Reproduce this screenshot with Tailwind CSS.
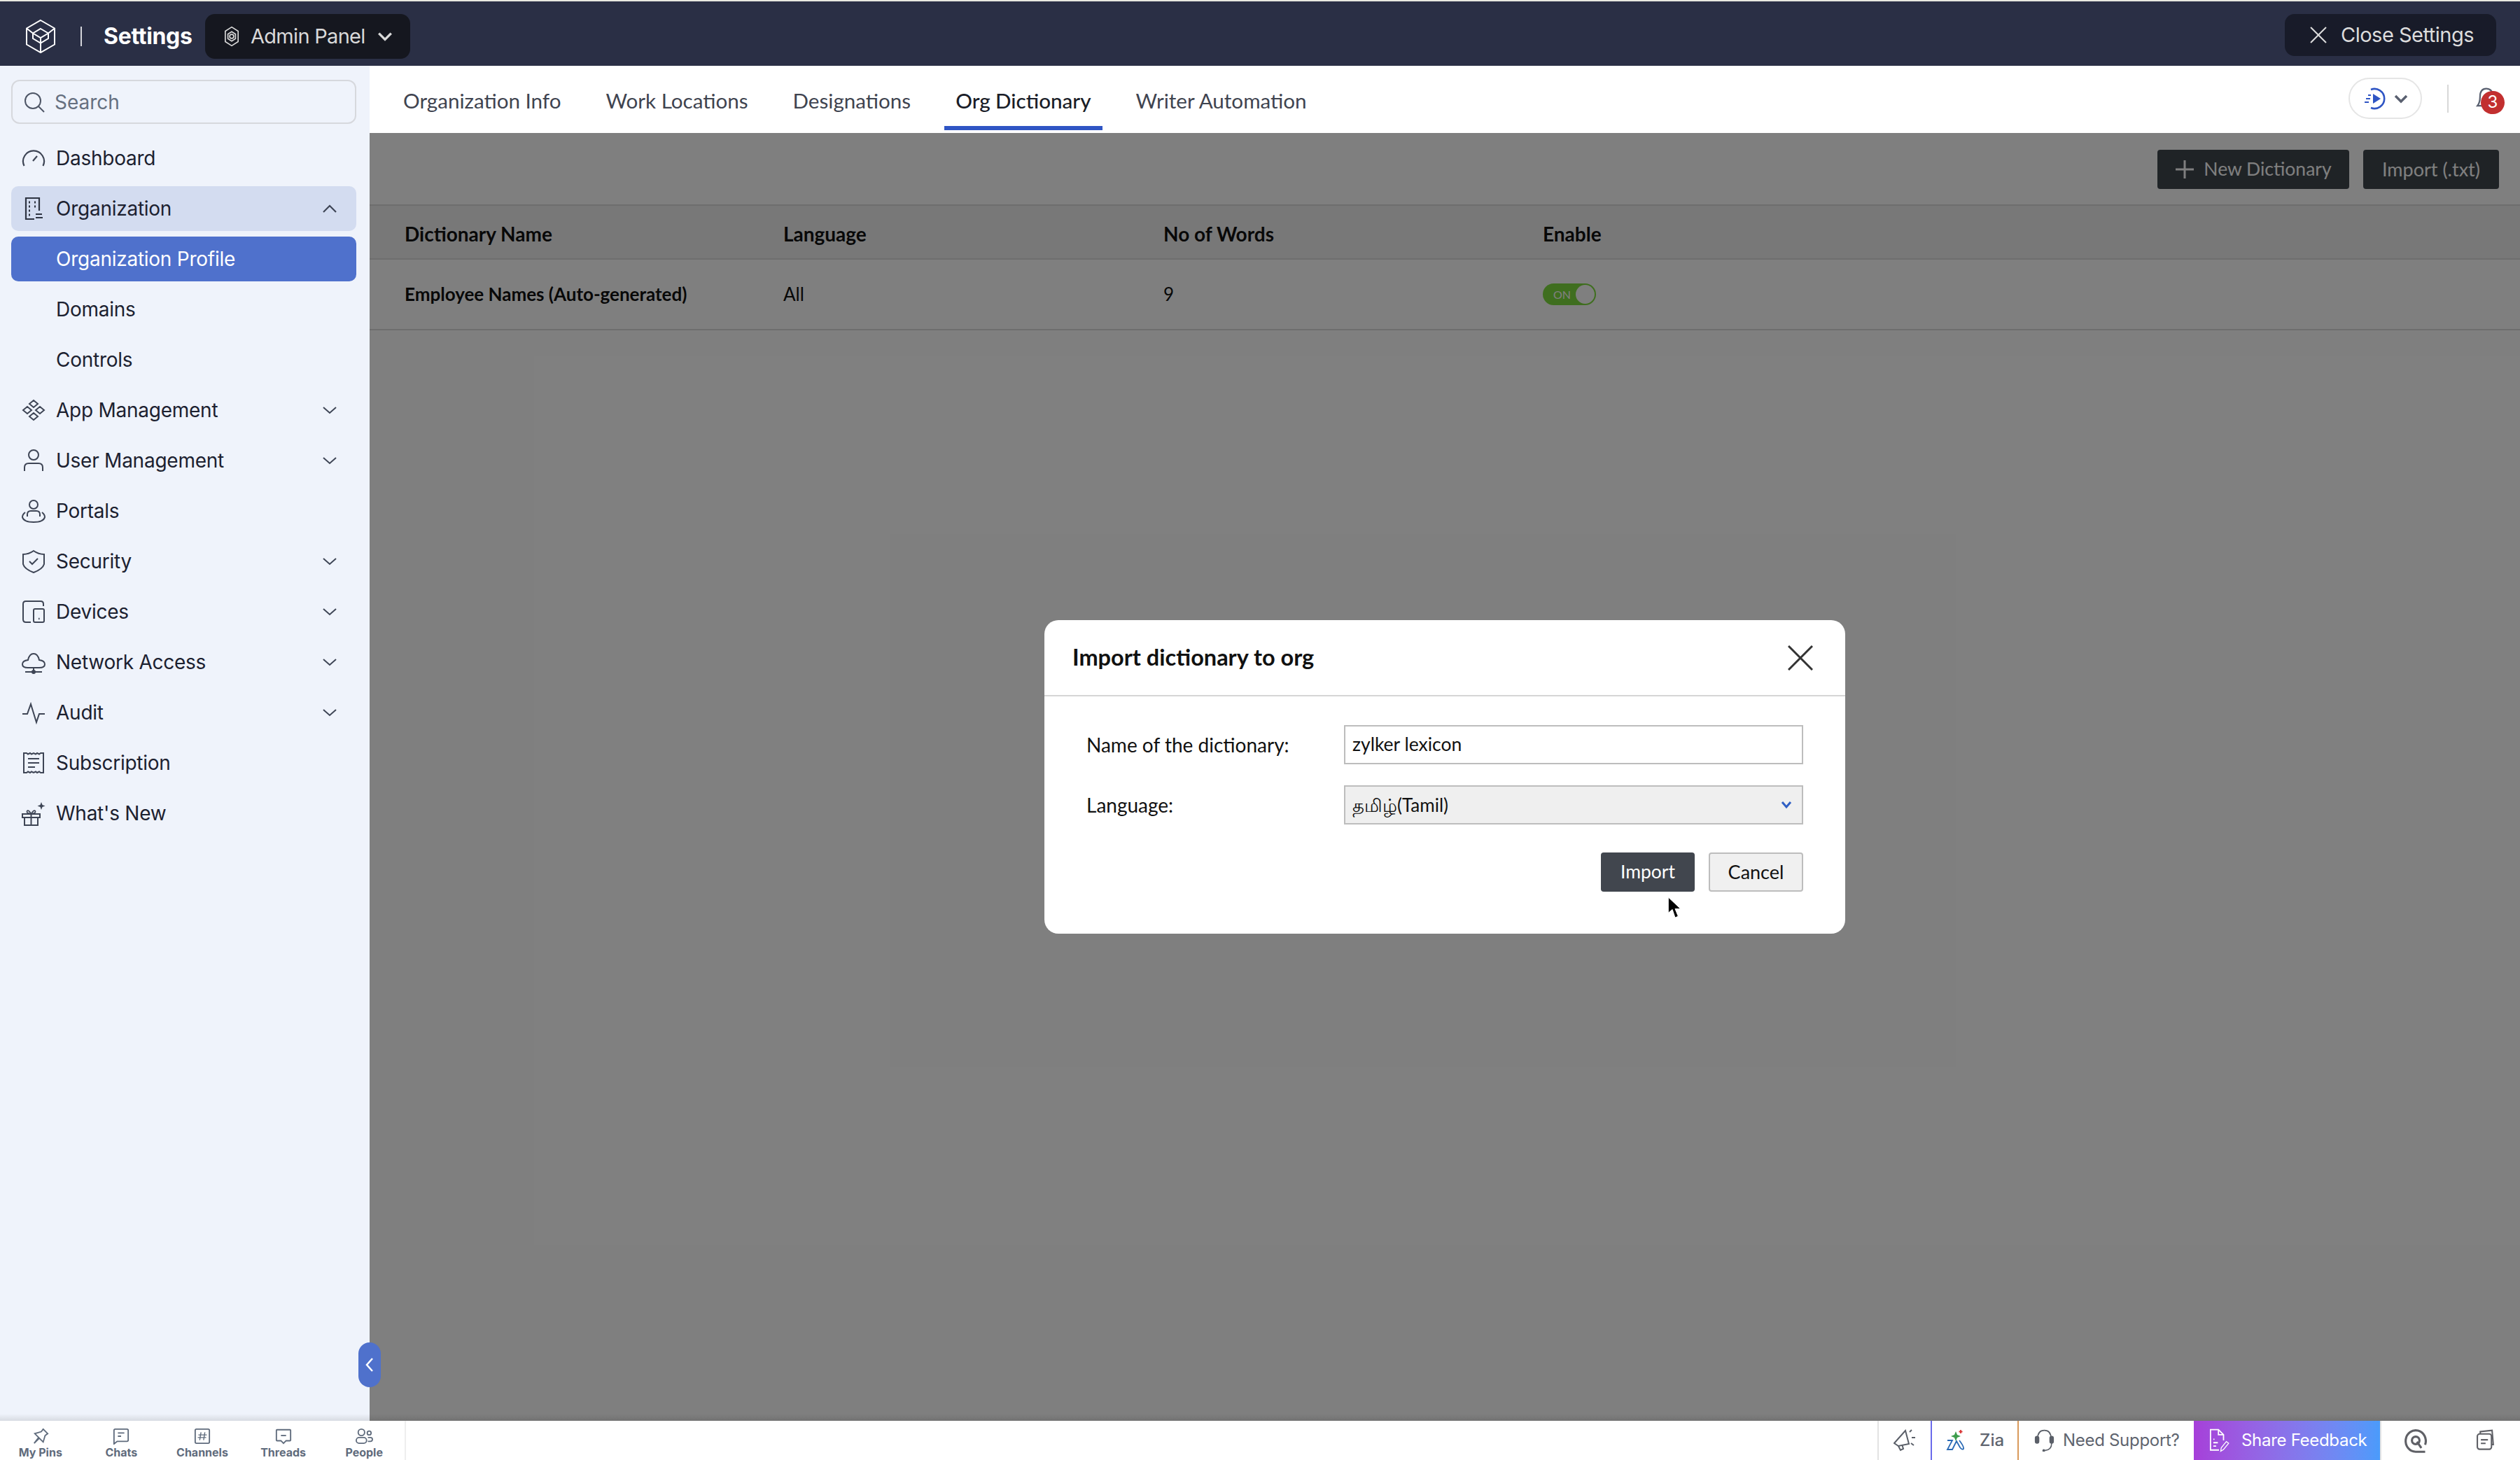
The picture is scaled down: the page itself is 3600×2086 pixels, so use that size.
<!DOCTYPE html>
<html lang="en">
<head>
<meta charset="UTF-8">
<title>Settings - Org Dictionary</title>
<script src="https://cdn.jsdelivr.net/npm/@tailwindcss/browser@4"></script>
</head>
<body class="w-[3600px] h-[2086px] overflow-hidden bg-white font-['Inter','Noto_Sans',sans-serif]">
<div class="flex flex-col h-full">

  <!-- top bar -->
  <header class="h-[94px] shrink-0 border-t-2 border-[#e8e8e0] bg-[#2a2f45] flex items-center justify-between pt-[8px] pl-[36px] pr-[34px] text-white">
    <div class="flex items-center">
      <svg class="w-[44px] h-[50px]" viewBox="0 0 44 50" fill="none" stroke="#fff" stroke-width="2"><path d="M22 2 42 13.500V36.500L22 48 2 36.500V13.500Z"/><path d="M22 14 33 20.500V28L22 34.500 11 28V20.500Z"/><path d="M11 20.500 22 27 33 20.500M22 27V48"/><path d="M2 13.500 11 20.500M42 13.500 33 20.500"/></svg>
      <div class="w-[2px] h-[28px] bg-white/80 ml-[35px]"></div>
      <div class="ml-[31px] w-[128px] text-[32px] font-bold tracking-[-0.3px] whitespace-nowrap">Settings</div>
      <button class="ml-[17px] w-[293px] h-[64px] rounded-[14px] bg-[#15171f] flex items-center pl-[26px] text-[#d9d9d9]">
        <svg class="w-[24px] h-[30px]" viewBox="0 0 26 36" fill="none" stroke="#d9d9d9" stroke-width="2"><path d="M13 2 24 9V27L13 34 2 27V9Z"/><circle cx="13" cy="18" r="3.500"/><path d="M13 10 19.500 14V22L13 26 6.500 22V14Z"/></svg>
        <span class="ml-[15px] w-[163px] text-left text-[29px] tracking-[-0.7px] whitespace-nowrap">Admin Panel</span>
        <svg class="ml-[18px] w-[22px] h-[14px]" viewBox="0 0 24 16" fill="none" stroke="#d9d9d9" stroke-width="4"><path d="M2 3 12 13 22 3"/></svg>
      </button>
    </div>
    <button class="w-[302px] h-[60px] rounded-[14px] bg-[#181b29] flex items-center pl-[36px] text-[#dcdcdc] -mt-[4px]">
      <svg class="w-[24px] h-[24px]" viewBox="0 0 24 24" fill="none" stroke="#dcdcdc" stroke-width="2"><path d="M1 1 23 23M23 1 1 23"/></svg>
      <span class="ml-[20px] text-[29px] tracking-[-0.5px] whitespace-nowrap">Close Settings</span>
    </button>
  </header>

  <div class="flex flex-1 min-h-0">
    <!-- sidebar -->
    <aside class="relative z-20 w-[528px] shrink-0 bg-[#eff3fb] pt-[20px] pl-[16px] pr-[19px] text-[#1c2130]">
      <div class="h-[63px] border-2 border-[#d6d8dd] rounded-[12px] flex items-center pl-[16px] text-[#667080] text-[28px]">
        <svg class="w-[30px] h-[30px]" viewBox="0 0 30 30" fill="none" stroke="#4e5666" stroke-width="2"><circle cx="13" cy="13" r="11"/><path d="m21 21 8 8"/></svg>
        <span class="ml-[14px]">Search</span>
      </div>
      <nav class="mt-[13px] flex flex-col text-[28px] tracking-[-0.25px]">
        <a class="h-[72px] flex items-center pl-[14px] pr-[28px]">
          <svg class="w-[36px] h-[36px]" viewBox="0 0 36 36" fill="none" stroke="#3e4555" stroke-width="2.200"><path d="M4.500 29A15 15 0 1 1 31.500 29"/><path d="m17 22 6-7"/></svg>
          <span class="ml-[14px]">Dashboard</span>
        </a>
        <a class="h-[64px] my-[4px] rounded-[10px] bg-[#d3dcf0] flex items-center pl-[14px] pr-[28px]">
          <svg class="w-[36px] h-[36px]" viewBox="0 0 36 36" fill="none" stroke="#2e3442" stroke-width="2.200"><path d="M26 21V3H7v30h12"/><path d="M11 9h2M19 9h2M11 15h2M19 15h2M11 21h2M11 27h2" stroke-width="3"/><path d="M21 26h9M21 31h10"/></svg>
          <span class="ml-[14px]">Organization</span>
          <svg class="ml-auto w-[20px] h-[12px]" viewBox="0 0 20 12" fill="none" stroke="#3e4555" stroke-width="2.200"><path d="M1 11 10 2 19 11"/></svg>
        </a>
        <a class="h-[64px] my-[4px] rounded-[10px] bg-[#4f71cc] text-white flex items-center pl-[64px]">Organization Profile</a>
        <a class="h-[72px] flex items-center pl-[64px]">Domains</a>
        <a class="h-[72px] flex items-center pl-[64px]">Controls</a>
        <a class="h-[72px] flex items-center pl-[14px] pr-[28px]">
          <svg class="w-[36px] h-[36px]" viewBox="0 0 36 36" fill="none" stroke="#3e4555" stroke-width="2"><path d="m18 4 6 5-6 5-6-5zM18 22l6 5-6 5-6-5zM9 13l6 5-6 5-6-5zM27 13l6 5-6 5-6-5z"/></svg>
          <span class="ml-[14px]">App Management</span>
          <svg class="ml-auto w-[20px] h-[12px]" viewBox="0 0 20 12" fill="none" stroke="#3e4555" stroke-width="2"><path d="M1 2 10 10 19 2"/></svg>
        </a>
        <a class="h-[72px] flex items-center pl-[14px] pr-[28px]">
          <svg class="w-[36px] h-[36px]" viewBox="0 0 36 36" fill="none" stroke="#3e4555" stroke-width="2"><circle cx="18" cy="10" r="7"/><path d="M5 33v-5q0-6 6-6h14q6 0 6 6v5"/></svg>
          <span class="ml-[14px]">User Management</span>
          <svg class="ml-auto w-[20px] h-[12px]" viewBox="0 0 20 12" fill="none" stroke="#3e4555" stroke-width="2"><path d="M1 2 10 10 19 2"/></svg>
        </a>
        <a class="h-[72px] flex items-center pl-[14px]">
          <svg class="w-[36px] h-[36px]" viewBox="0 0 36 36" fill="none" stroke="#3e4555" stroke-width="2"><circle cx="18" cy="9" r="6"/><path d="M9 26v-3q0-5 5-5h8q5 0 5 5v3"/><path d="M6 20q-4 3-4 7 2 7 16 7t16-7q0-4-4-7"/></svg>
          <span class="ml-[14px]">Portals</span>
        </a>
        <a class="h-[72px] flex items-center pl-[14px] pr-[28px]">
          <svg class="w-[36px] h-[36px]" viewBox="0 0 36 36" fill="none" stroke="#3e4555" stroke-width="2"><path d="M18 3q7 5 15 5v14q-2 7-15 12Q5 29 3 22V8q8 0 15-5Z"/><path d="m12 18 4 4 8-8"/></svg>
          <span class="ml-[14px]">Security</span>
          <svg class="ml-auto w-[20px] h-[12px]" viewBox="0 0 20 12" fill="none" stroke="#3e4555" stroke-width="2"><path d="M1 2 10 10 19 2"/></svg>
        </a>
        <a class="h-[72px] flex items-center pl-[14px] pr-[28px]">
          <svg class="w-[36px] h-[36px]" viewBox="0 0 36 36" fill="none" stroke="#3e4555" stroke-width="2"><path d="M32 10V7q0-4-4-4H7Q3 3 3 7v22q0 4 4 4h7"/><rect x="18" y="14" width="15" height="19" rx="2"/><path d="M25 28h1.500" stroke-width="2.500"/></svg>
          <span class="ml-[14px]">Devices</span>
          <svg class="ml-auto w-[20px] h-[12px]" viewBox="0 0 20 12" fill="none" stroke="#3e4555" stroke-width="2"><path d="M1 2 10 10 19 2"/></svg>
        </a>
        <a class="h-[72px] flex items-center pl-[14px] pr-[28px]">
          <svg class="w-[36px] h-[36px]" viewBox="0 0 36 36" fill="none" stroke="#3e4555" stroke-width="2"><path d="M10 26q-8 0-8-5t8-6q2-9 8-9t8 9q8 1 8 6t-8 5Z"/><path d="M18 26v5M6 32h24"/><circle cx="18" cy="32" r="2"/></svg>
          <span class="ml-[14px]">Network Access</span>
          <svg class="ml-auto w-[20px] h-[12px]" viewBox="0 0 20 12" fill="none" stroke="#3e4555" stroke-width="2"><path d="M1 2 10 10 19 2"/></svg>
        </a>
        <a class="h-[72px] flex items-center pl-[14px] pr-[28px]">
          <svg class="w-[36px] h-[36px]" viewBox="0 0 36 36" fill="none" stroke="#3e4555" stroke-width="2"><path d="M2 20h7l5-14 8 26 4-12h8"/></svg>
          <span class="ml-[14px]">Audit</span>
          <svg class="ml-auto w-[20px] h-[12px]" viewBox="0 0 20 12" fill="none" stroke="#3e4555" stroke-width="2"><path d="M1 2 10 10 19 2"/></svg>
        </a>
        <a class="h-[72px] flex items-center pl-[14px]">
          <svg class="w-[36px] h-[36px]" viewBox="0 0 36 36" fill="none" stroke="#3e4555" stroke-width="2"><path d="M4 4h4l2 1.500L13 4l2 1.500L18 4l3 1.500L23 4l3 1.500L28 4h4v28h-4l-2-1.500-3 1.500-2-1.500-3 1.500-3-1.500-2 1.500-3-1.500L8 32H4Z"/><path d="M10 12h16M10 18h16M10 24h10"/></svg>
          <span class="ml-[14px]">Subscription</span>
        </a>
        <a class="h-[72px] flex items-center pl-[14px]">
          <svg class="w-[36px] h-[36px]" viewBox="0 0 36 36" fill="none" stroke="#3e4555" stroke-width="2"><path d="M2 19h25v5H2zM5 24h19v11H5zM14.500 19v16"/><path d="M14.500 19q-7-1-6-4 2-3 6 4 4-7 6-4 1 3-6 4Z" stroke-width="1.600"/><path d="m29 2 1.500 4 4 1.500-4 1.500L29 13l-1.500-4-4-1.500 4-1.500Z" fill="#3e4555" stroke="none"/></svg>
          <span class="ml-[14px]">What's New</span>
        </a>
      </nav>
      <button class="absolute right-[-16px] bottom-[48px] w-[32px] h-[64px] rounded-full bg-[#4f71cc] flex items-center justify-center">
        <svg class="w-[12px] h-[22px]" viewBox="0 0 12 22" fill="none" stroke="#fff" stroke-width="2.500"><path d="M10 2 2 11l8 9"/></svg>
      </button>
    </aside>

    <!-- main -->
    <main class="relative flex-1 min-w-0 flex flex-col font-['Lato',sans-serif]">
      <div class="h-[96px] shrink-0 flex items-start justify-between pl-[32px] pr-[28px] bg-white text-[29.600px] text-[#3f4450]">
        <nav class="flex gap-[32px] items-stretch">
          <a class="h-[92px] px-[16px] flex items-center pt-[14px] border-b-[6px] border-transparent">Organization Info</a>
          <a class="h-[92px] px-[16px] flex items-center pt-[14px] border-b-[6px] border-transparent">Work Locations</a>
          <a class="h-[92px] px-[16px] flex items-center pt-[14px] border-b-[6px] border-transparent">Designations</a>
          <a class="h-[92px] px-[16px] flex items-center pt-[14px] font-medium text-[#1a1d28] border-b-[6px] border-[#2f55c4]">Org Dictionary</a>
          <a class="h-[92px] px-[16px] flex items-center pt-[14px] border-b-[6px] border-transparent">Writer Automation</a>
        </nav>
        <div class="flex items-center mt-[17px]">
          <button class="w-[105px] h-[59px] rounded-full border-2 border-[#e5e5e5] flex items-center pl-[20px]">
            <svg class="w-[34px] h-[34px]" viewBox="0 0 34 34" fill="none" stroke="#2f55c4" stroke-width="2.600"><path d="M10 4a14 14 0 1 1 0 26"/><path d="M13 10v14l11-7Z" fill="#2f55c4" stroke="none"/><path d="M6 12h4M3 17h6M1 22h6" stroke-width="2.200"/></svg>
            <svg class="ml-[9px] w-[20px] h-[14px]" viewBox="0 0 20 14" fill="none" stroke="#5a6070" stroke-width="3.500"><path d="M2 3 10 11 18 3"/></svg>
          </button>
          <div class="ml-[36px] w-[2px] h-[40px] bg-[#d8d8d8]"></div>
          <div class="relative ml-[38px] w-[36px] h-[42px] pt-[4px]">
            <svg class="w-[30px] h-[36px]" viewBox="0 0 30 40" fill="none" stroke="#5a6070" stroke-width="2.500"><path d="M2 30q4-5 4-14Q6 3 16 3t11 13q0 9 2 14Z"/><path d="M12 34q3 4 6 0"/></svg>
            <span class="absolute left-[8px] top-[10px] w-[34px] h-[33px] rounded-full bg-[#c22f2f] text-white text-[24px] font-['Inter',sans-serif] flex items-center justify-center">3</span>
          </div>
        </div>
      </div>

      <div class="flex-1 bg-white">
        <div class="h-[102px] flex justify-end items-start gap-[20px] pt-[24px] pr-[30px]">
          <button class="h-[56px] w-[274px] rounded-[4px] bg-[#3f474d] text-white flex items-center justify-center text-[26.500px]">
            <svg class="w-[28px] h-[28px] mr-[13px]" viewBox="0 0 28 28" fill="none" stroke="#fff" stroke-width="3"><path d="M14 1v26M1 14h26"/></svg>
            New Dictionary
          </button>
          <button class="h-[56px] w-[194px] rounded-[4px] bg-[#3f474d] text-white text-[27px]">Import (.txt)</button>
        </div>
        <div class="h-[79px] bg-[#f0f0f0] border-y-2 border-[#dcdcdc] grid grid-cols-[541px_543px_542px_1fr] items-center pt-[4px] pl-[50px] text-[28px] font-bold text-[#111]">
          <div>Dictionary Name</div>
          <div>Language</div>
          <div>No of Words</div>
          <div>Enable</div>
        </div>
        <div class="h-[101px] border-b-2 border-[#dcdcdc] grid grid-cols-[541px_543px_542px_1fr] items-center pl-[50px] text-[26px] text-[#111]">
          <div class="font-bold">Employee Names (Auto-generated)</div>
          <div>All</div>
          <div>9</div>
          <div>
            <div class="relative w-[76px] h-[31px] rounded-full bg-[#7edc3e] text-[16px] text-white leading-[31px] pl-[15px]">ON
              <span class="absolute right-[2px] top-[2px] w-[27px] h-[27px] rounded-full bg-white"></span>
            </div>
          </div>
        </div>
      </div>

      <!-- dim layer + dialog -->
      <div class="absolute inset-x-0 top-[96px] bottom-0 z-10 bg-black/50 flex items-center justify-center">
        <div class="w-[1144px] h-[448px] rounded-[20px] bg-white flex flex-col text-[#111]">
          <div class="h-[109px] shrink-0 border-b-2 border-[#d5d5d5] flex items-center justify-between pl-[40px] pr-[46px]">
            <h2 class="text-[32.500px] font-bold">Import dictionary to org</h2>
            <svg class="w-[36px] h-[36px]" viewBox="0 0 36 36" fill="none" stroke="#333" stroke-width="3"><path d="M1 1 35 35M35 1 1 35"/></svg>
          </div>
          <div class="flex-1 pl-[60px] pr-[60px] pt-[41px] text-[28px]">
            <div class="flex items-center h-[56px]">
              <label class="w-[368px]">Name of the dictionary:</label>
              <div class="flex-1 h-full border-2 border-[#bdbdbd] flex items-center pl-[10px] text-[26.500px]">zylker lexicon</div>
            </div>
            <div class="flex items-center h-[56px] mt-[30px]">
              <label class="w-[368px]">Language:</label>
              <div class="flex-1 h-full border-2 border-[#bdbdbd] bg-[#efefef] flex items-center justify-between pl-[10px] pr-[14px] text-[26px]">
                <span>தமிழ்(Tamil)</span>
                <svg class="w-[16px] h-[12px]" viewBox="0 0 16 12" fill="none" stroke="#2f5fc4" stroke-width="3"><path d="M2 2 8 9 14 2"/></svg>
              </div>
            </div>
            <div class="flex justify-end gap-[20px] mt-[40px]">
              <button class="relative w-[134px] h-[56px] rounded-[4px] bg-[#41464e] text-white text-[26.500px]">Import
                <svg class="absolute left-[95px] top-[63px] w-[22px] h-[33px]" viewBox="0 0 22 34"><path d="M1 1V24L7 19 11 31 15.500 29 11 18H19Z" fill="#000" stroke="#fff" stroke-width="1"/></svg>
              </button>
              <button class="w-[135px] h-[56px] rounded-[4px] bg-[#f0f0f0] border-2 border-[#bdbdbd] text-[27px]">Cancel</button>
            </div>
          </div>
        </div>
      </div>
    </main>
  </div>

  <!-- bottom bar -->
  <footer class="relative z-30 h-[56px] shrink-0 bg-white flex items-stretch justify-between">
    <div class="absolute inset-x-0 top-[-10px] h-[10px] bg-gradient-to-b from-transparent to-black/10"></div>
    <div class="w-[580px] flex border-r-2 border-[#eeeeee] text-[16px] font-bold text-[#5f6b7c] leading-none">
      <div class="w-[116px] flex flex-col items-center pt-[10px]">
        <svg class="w-[24px] h-[24px]" viewBox="0 0 26 26" fill="none" stroke="#5f6b7c" stroke-width="2"><path d="M17 2 24 9 20 12 17 22 11 16 3 24 10 15 4 9 14 6Z"/></svg>
        <span class="mt-[3px]">My Pins</span>
      </div>
      <div class="w-[116px] flex flex-col items-center pt-[10px]">
        <svg class="w-[24px] h-[24px]" viewBox="0 0 26 26" fill="none" stroke="#5f6b7c" stroke-width="2"><path d="M2 25V4q0-2 2-2h18q2 0 2 2v15q0 2-2 2H7Z"/><path d="M8 8h10M8 13h5"/></svg>
        <span class="mt-[3px]">Chats</span>
      </div>
      <div class="w-[116px] flex flex-col items-center pt-[10px]">
        <svg class="w-[24px] h-[24px]" viewBox="0 0 26 26" fill="none" stroke="#5f6b7c" stroke-width="2"><rect x="2" y="2" width="22" height="22" rx="2"/><path d="M11 7 9 19M17 7l-2 12M7 11h13M6 15h13" stroke-width="1.500"/></svg>
        <span class="mt-[3px]">Channels</span>
      </div>
      <div class="w-[116px] flex flex-col items-center pt-[10px]">
        <svg class="w-[24px] h-[24px]" viewBox="0 0 26 26" fill="none" stroke="#5f6b7c" stroke-width="2"><path d="M3 3h20q1 0 1 1v15q0 1-1 1h-6l-4 4-4-4H3q-1 0-1-1V4q0-1 1-1Z"/><path d="M9 12h8"/></svg>
        <span class="mt-[3px]">Threads</span>
      </div>
      <div class="w-[116px] flex flex-col items-center pt-[10px]">
        <svg class="w-[26px] h-[24px]" viewBox="0 0 28 26" fill="none" stroke="#5f6b7c" stroke-width="2"><circle cx="10" cy="7" r="5"/><circle cx="22" cy="8" r="3"/><rect x="2" y="15" width="16" height="9" rx="4.500"/><path d="M20 15h4q3 0 3 3t-3 3h-4"/></svg>
        <span class="mt-[3px]">People</span>
      </div>
    </div>

    <div class="flex items-stretch text-[24px] text-[#60656f]">
      <div class="w-[76px] border-l-2 border-[#e3e3e3] flex items-center justify-center">
        <svg class="w-[32px] h-[32px]" viewBox="2 2 32 32" fill="none" stroke="#5a5f68" stroke-width="2"><path d="M3 22 19 4l5 19-15 3Z"/><path d="m9 26 3 6 4-2-1.500-5M25 6l3-3M28 14h5M27 22l4 3"/></svg>
      </div>
      <div class="w-[124px] border-l-2 border-[#6a6aeb] flex items-center pl-[20px] gap-[20px]">
        <svg class="w-[28px] h-[30px]" viewBox="0 0 28 30" fill="none"><path d="M2 15h7L2 28h7l6-12 5 9q3 4 5 2 1-3-6-12" stroke="#2a6ab5" stroke-width="1.800"/><path d="m14 2 2 5 5 2-5 2-2 5-2-5-5-2 5-2Z" fill="#3d9c4b"/><path d="M21 0v5M18.500 2.500h5" stroke="#d93636" stroke-width="1.800"/></svg>
        <span class="font-medium">Zia</span>
      </div>
      <div class="w-[252px] border-l-2 border-[#d99a5b] flex items-center pl-[20px] tracking-[-0.3px]">
        <svg class="w-[33px] h-[32px] shrink-0" viewBox="0 0 34 40" fill="none" stroke="#5a5f68" stroke-width="2"><path d="M5 17Q5 2 17 2t12 15"/><rect x="1" y="13" width="6" height="12" rx="3" fill="#5a5f68"/><rect x="27" y="13" width="6" height="12" rx="3" fill="#5a5f68"/><path d="M30 25q0 12-12 13"/><circle cx="16" cy="38" r="1.500" fill="#5a5f68"/></svg>
        <span class="ml-[10px] whitespace-nowrap">Need Support?</span>
      </div>
      <div class="w-[266px] bg-gradient-to-r from-[#a63fd9] to-[#4a9bfb] flex items-center pl-[20px] text-white tracking-[-0.3px]">
        <svg class="w-[32px] h-[34px] shrink-0" viewBox="0 0 36 42" fill="none" stroke="#fff" stroke-width="2.200"><path d="M18 38H3V2h14l9 9v10M17 2v9h9"/><path d="M8 19h2M8 25h8M8 31h5"/><path d="m21 40 1-6 9-11 4 3-9 11Z" stroke-width="1.600"/></svg>
        <span class="ml-[16px] whitespace-nowrap">Share Feedback</span>
      </div>
      <div class="w-[100px] border-l-2 border-[#e3e3e3] flex items-center justify-center">
        <svg class="w-[36px] h-[36px]" viewBox="0 0 36 40" fill="none" stroke="#5f6066" stroke-width="3.500"><path d="M33 38H18a16 17 0 1 1 15-11"/><circle cx="18" cy="20" r="6"/><path d="m20 22 7 10"/></svg>
      </div>
      <div class="w-[100px] flex items-center justify-center">
        <svg class="w-[30px] h-[32px]" viewBox="0 0 30 38" fill="none" stroke="#5f6066" stroke-width="2.500"><rect x="2" y="8" width="24" height="26" rx="4"/><path d="M7 8V4l20-2 2 24h-3M8 18h12M8 24h8"/></svg>
      </div>
    </div>
  </footer>
</div>
</body>
</html>
